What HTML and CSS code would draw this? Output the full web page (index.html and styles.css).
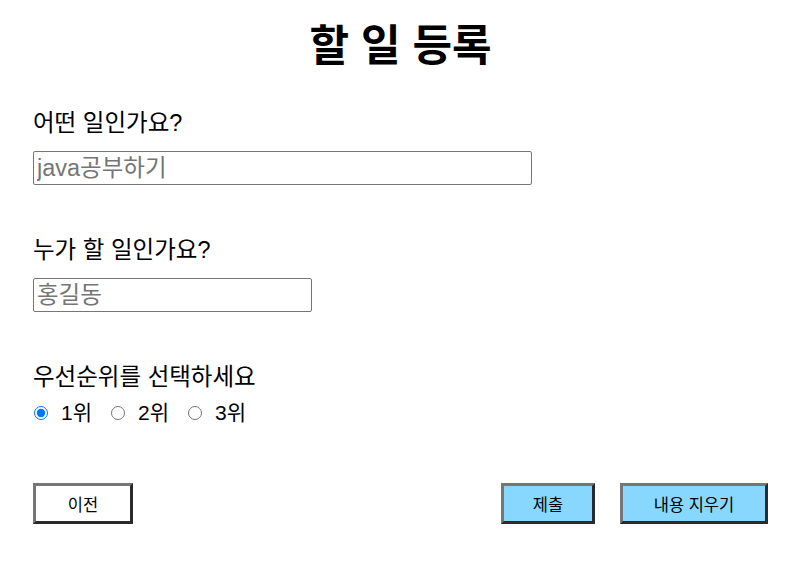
FILE: index.html
```html
<!DOCTYPE html>
<html lang="ko">
<head>
<meta charset="utf-8">
<title>할 일 등록</title>
<link rel="stylesheet" href="styles.css">
</head>
<body>
<main class="page">
  <h1 class="title">할 일 등록</h1>
  <form class="form">
    <div class="field">
      <label class="label" for="what">어떤 일인가요?</label>
      <input class="input input-wide" id="what" type="text" placeholder="java공부하기">
    </div>
    <div class="field">
      <label class="label" for="who">누가 할 일인가요?</label>
      <input class="input input-narrow" id="who" type="text" placeholder="홍길동">
    </div>
    <div class="field">
      <span class="label label-tight">우선순위를 선택하세요</span>
      <div class="radios">
        <label class="radio"><input type="radio" name="rank" checked><span>1위</span></label>
        <label class="radio"><input type="radio" name="rank"><span>2위</span></label>
        <label class="radio"><input type="radio" name="rank"><span>3위</span></label>
      </div>
    </div>
    <div class="actions">
      <button type="button" class="btn btn-prev">이전</button>
      <div class="actions-right">
        <button type="submit" class="btn btn-blue btn-submit">제출</button>
        <button type="reset" class="btn btn-blue btn-clear">내용 지우기</button>
      </div>
    </div>
  </form>
</main>
</body>
</html>
```
FILE: styles.css
```css
html, body {
  margin: 0;
  padding: 0;
  background: #ffffff;
}
body {
  font-family: "Liberation Sans", "Noto Sans CJK KR", sans-serif;
  color: #000;
}
.page {
  padding: 16px 27px 0 33px;
}
.title {
  margin: 0;
  text-align: center;
  font-size: 43px;
  line-height: 60px;
  font-weight: bold;
}
.form {
  display: flex;
  flex-direction: column;
  margin-top: 33px;
}
.field {
  display: flex;
  flex-direction: column;
  align-items: flex-start;
  margin-bottom: 51px;
}
.label {
  font-size: 23.5px;
  line-height: 28px;
  margin-bottom: 14px;
}
.label-tight {
  margin-bottom: 11px;
}
.input {
  box-sizing: border-box;
  height: 34px;
  font-family: "Liberation Sans", "Noto Sans CJK KR", sans-serif;
  font-size: 23.5px;
  padding: 0 3px;
  border: 1px solid #767676;
  border-radius: 2px;
  margin: 0;
}
.input::placeholder {
  color: #757575;
}
.input-wide { width: 499px; }
.input-narrow { width: 279px; }
.radios {
  display: flex;
  align-items: center;
  font-size: 21px;
  line-height: 22px;
}
.radio {
  display: flex;
  align-items: center;
  margin-right: 18px;
}
.radio input {
  width: 14px;
  height: 14px;
  margin: 0 13px 0 1px;
}
.actions {
  display: flex;
  justify-content: space-between;
  margin-top: 8px;
}
.actions-right {
  display: flex;
  gap: 25px;
}
.btn {
  box-sizing: border-box;
  height: 41px;
  font-family: "Liberation Sans", "Noto Sans CJK KR", sans-serif;
  font-size: 16.5px;
  color: #000;
  background: #ffffff;
  border-style: solid;
  border-width: 3px;
  border-color: #767676 #2a2a2a #2a2a2a #767676;
  padding: 0;
}
.btn-blue { background: #88d7ff; }
.btn-prev { width: 100px; }
.btn-submit { width: 94px; }
.btn-clear { width: 148px; }
```
